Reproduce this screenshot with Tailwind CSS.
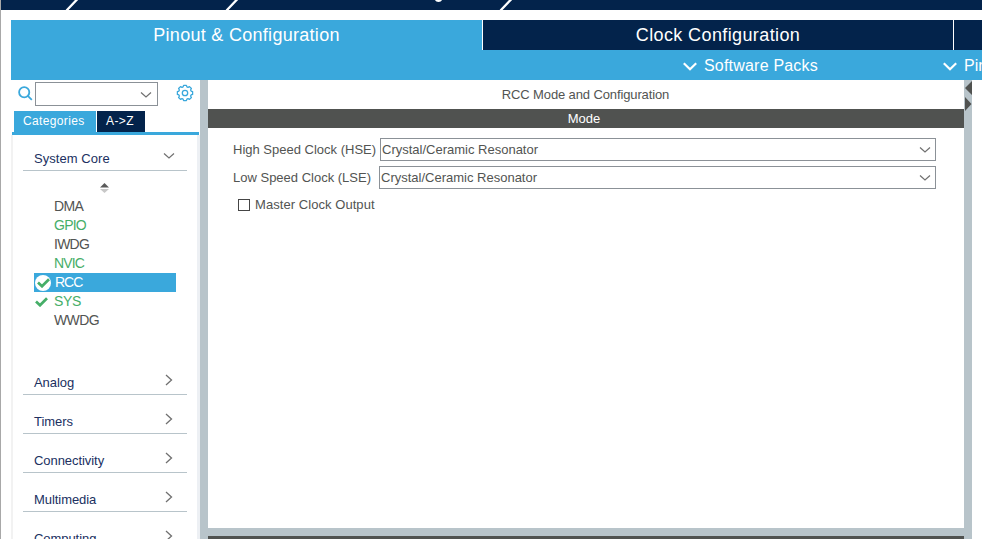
<!DOCTYPE html>
<html lang="en">
<head>
<meta charset="utf-8">
<title>Pinout &amp; Configuration</title>
<script src="https://cdn.jsdelivr.net/npm/@tailwindcss/browser@4"></script>
</head>
<body class="bg-white">
<svg class="hidden">
  <symbol id="down" viewBox="0 0 12 8"><path d="M1 1.500l5 4.500 5-4.500" fill="none" stroke="currentColor" stroke-width="1.2"/></symbol>
  <symbol id="right" viewBox="0 0 8 12"><path d="M1 1l5.500 5-5.500 5" fill="none" stroke="currentColor" stroke-width="1.3"/></symbol>
  <symbol id="bold-down" viewBox="0 0 14 9"><path d="M.8 1.200l6.200 6 6.200-6" fill="none" stroke="currentColor" stroke-width="2.2"/></symbol>
  <symbol id="check" viewBox="0 0 13 10"><path d="M1 4.600l4 3.700L12 1.200" fill="none" stroke="#46ae68" stroke-width="2.7"/></symbol>
</svg>
<div class="flex h-[539px] w-[982px] flex-col overflow-hidden whitespace-nowrap border-l border-[#a8a8a8] bg-white font-['Liberation_Sans',Arial,sans-serif] text-[13px] text-[#525452]">
  <header class="h-[10px] shrink-0 bg-[#03234b]">
    <svg class="block" width="981" height="10" viewBox="1 0 981 10"><path d="M77.500 -1L66.500 10.500M237.500 -1L226.500 10.500M511.500 -1L500.500 10.500" stroke="#fff" stroke-width="2.300"/><path d="M435 0h7c-1 2.600-6 2.600-7 0z" fill="#fff"/></svg>
  </header>
  <nav class="mt-[10px] ml-[10px] flex h-[30px] shrink-0 gap-px text-[18px] leading-[31px] text-white">
    <div class="w-[471px] shrink-0 bg-[#3aa8dc] text-center"><span class="tracking-[0.29px]">Pinout &amp; Configuration</span></div>
    <div class="w-[470px] shrink-0 bg-[#03234b] text-center"><span class="tracking-[0.39px]">Clock Configuration</span></div>
    <div class="grow bg-[#03234b]"></div>
  </nav>
  <div class="ml-[10px] flex h-[30px] shrink-0 items-center overflow-hidden bg-[#3aa8dc] pl-[672px] text-[16px] leading-[30px] text-white">
    <svg class="mt-[2px] h-[9px] w-[14px] shrink-0"><use href="#bold-down"/></svg>
    <span class="mt-[2px] ml-[7px] w-[239px] shrink-0 tracking-[0.2px]">Software Packs</span>
    <svg class="mt-[2px] h-[9px] w-[14px] shrink-0"><use href="#bold-down"/></svg>
    <span class="mt-[2px] ml-[7px]">Pinout</span>
  </div>
  <div class="ml-[10px] flex min-h-0 grow">
    <aside class="flex w-[189px] shrink-0 flex-col">
      <div class="flex h-[31px] shrink-0 items-start pt-[2px] pl-[7px]">
        <svg class="mt-[4px] h-[15px] w-[15px]" viewBox="0 0 15 15" fill="none" stroke="#3aa8dc" stroke-width="1.800"><circle cx="6.200" cy="6.200" r="5.100"/><path d="M9.800 9.800l4 4"/></svg>
        <div class="ml-[2px] flex h-[24px] w-[123px] items-center justify-end border border-[#8b9197] pr-[5px] text-[#707070]"><svg class="mt-px h-[8px] w-[12px]"><use href="#down"/></svg></div>
        <svg class="ml-[18px] mt-[2px] h-[18px] w-[18px]" viewBox="-9 -9 18 18" fill="none" stroke="#3aa8dc" stroke-width="1.300"><circle r="2.700"/><path stroke-linejoin="round" d="M-1.400-7.600h2.800l.5 1.500 1.100.5 1.500-.8 1.900 1.900-.8 1.500.5 1.100 1.500.5v2.800l-1.500.5-.5 1.100.8 1.500-1.900 1.900-1.500-.8-1.100.5-.5 1.500h-2.800l-.5-1.500-1.100-.5-1.500.8-1.900-1.900.8-1.500-.5-1.100-1.500-.5v-2.800l1.500-.5.5-1.100-.8-1.500 1.900-1.900 1.500.8 1.100-.5z"/></svg>
      </div>
      <div class="ml-[3px] flex h-[21px] shrink-0 gap-px text-[12px] leading-[21px] text-white">
        <div class="w-[82px] bg-[#3aa8dc] pl-[9px] tracking-[0.35px]">Categories</div>
        <div class="w-[48px] bg-[#03234b] pl-[9px] tracking-[0.4px]">A-&gt;Z</div>
      </div>
      <div class="ml-px h-[3px] w-[187px] shrink-0 bg-[#3aa8dc]"></div>
      <div class="min-h-0 grow overflow-hidden border-r-[3px] border-l-2 border-r-[#edf0f4] border-l-[#f2f2f2] pr-[10px] pl-[10px] tracking-[-0.06px] text-[#20305f]">
        <div class="flex h-[36px] items-end justify-between border-b border-[#b8c4ca] pr-[12px] pl-[11px]"><span class="mb-[4px] leading-[15px] tracking-[0.05px]">System Core</span><svg class="mb-[10px] h-[8px] w-[12px] text-[#707070]"><use href="#down"/></svg></div>
        <svg class="mt-[12px] ml-[77px] block h-[10px] w-[9px]" viewBox="0 0 9 10"><path d="M4.500 0L9 4.500H0z" fill="#5a5a5a"/><path d="M0 6h9L4.500 10z" fill="#c8c8c8"/></svg>
        <ul class="mt-[4px] ml-[11px] w-[142px] text-[14px] leading-[19px] tracking-[-0.6px] text-[#525452]">
          <li class="h-[19px] pl-[20px]">DMA</li>
          <li class="h-[19px] pl-[20px] tracking-[-0.75px] text-[#46ae68]">GPIO</li>
          <li class="h-[19px] pl-[20px] tracking-[-0.75px]">IWDG</li>
          <li class="h-[19px] pl-[20px] tracking-[-0.9px] text-[#46ae68]">NVIC</li>
          <li class="flex h-[19px] items-center bg-[#3aa8dc] pl-px tracking-[-1px] text-white"><span class="mr-[4px] flex h-[16px] w-[16px] items-center justify-center rounded-full bg-white"><svg class="h-[10px] w-[13px]"><use href="#check"/></svg></span>RCC</li>
          <li class="flex h-[19px] items-center pl-px tracking-[-0.35px] text-[#46ae68]"><svg class="mr-[6px] h-[10px] w-[13px]"><use href="#check"/></svg>SYS</li>
          <li class="h-[19px] pl-[20px]">WWDG</li>
        </ul>
        <div class="pt-[26px]">
          <div class="flex h-[39px] items-end justify-between border-b border-[#b8c4ca] pr-[14px] pl-[11px]"><span class="mb-[4px] leading-[15px]">Analog</span><svg class="mb-[8px] h-[12px] w-[8px] text-[#707070]"><use href="#right"/></svg></div>
          <div class="flex h-[39px] items-end justify-between border-b border-[#b8c4ca] pr-[14px] pl-[11px]"><span class="mb-[4px] leading-[15px]">Timers</span><svg class="mb-[8px] h-[12px] w-[8px] text-[#707070]"><use href="#right"/></svg></div>
          <div class="flex h-[39px] items-end justify-between border-b border-[#b8c4ca] pr-[14px] pl-[11px]"><span class="mb-[4px] leading-[15px]">Connectivity</span><svg class="mb-[8px] h-[12px] w-[8px] text-[#707070]"><use href="#right"/></svg></div>
          <div class="flex h-[39px] items-end justify-between border-b border-[#b8c4ca] pr-[14px] pl-[11px]"><span class="mb-[4px] leading-[15px]">Multimedia</span><svg class="mb-[8px] h-[12px] w-[8px] text-[#707070]"><use href="#right"/></svg></div>
          <div class="flex h-[39px] items-end justify-between border-b border-[#b8c4ca] pr-[14px] pl-[11px]"><span class="mb-[4px] leading-[15px]">Computing</span><svg class="mb-[8px] h-[12px] w-[8px] text-[#707070]"><use href="#right"/></svg></div>
        </div>
      </div>
    </aside>
    <div class="w-[8px] shrink-0 bg-[#b8c4ca]"></div>
    <main class="flex w-[756px] shrink-0 flex-col">
      <h1 class="h-[29px] shrink-0 pr-px text-center leading-[29px] tracking-[-0.12px]">RCC Mode and Configuration</h1>
      <h2 class="h-[19px] shrink-0 bg-[#505250] pr-1 text-center leading-[19px] text-white">Mode</h2>
      <div class="h-[400px] shrink-0 pt-[10px] pr-[28px] pl-[25px]">
        <div class="flex h-[23px] items-center"><span class="w-[147px] shrink-0">High Speed Clock (HSE)</span><div class="flex h-[23px] grow items-center justify-between border border-[#8b9197] pr-[4px] pl-px"><span>Crystal/Ceramic Resonator</span><svg class="h-[8px] w-[12px] text-[#707070]"><use href="#down"/></svg></div></div>
        <div class="mt-[5px] flex h-[23px] items-center"><span class="w-[146px] shrink-0">Low Speed Clock (LSE)</span><div class="flex h-[23px] grow items-center justify-between border border-[#8b9197] pr-[4px] pl-px"><span>Crystal/Ceramic Resonator</span><svg class="h-[8px] w-[12px] text-[#707070]"><use href="#down"/></svg></div></div>
        <div class="mt-[6px] flex h-[20px] items-center pl-[5px]"><span class="mr-[5px] h-[12px] w-[12px] border border-[#454545]"></span><span class="tracking-[0.06px]">Master Clock Output</span></div>
      </div>
      <div class="h-[8px] shrink-0 bg-[#b8c4ca]"></div>
      <div class="grow bg-[#505250]"></div>
    </main>
    <div class="w-[8px] shrink-0 bg-[#b8c4ca]"><svg class="block h-[31px] w-[8px]" viewBox="0 0 8 31"><path d="M8 1v14L1 8zM1 17l6.500 7L1 31z" fill="#505250"/></svg></div>
  </div>
</div>
</body>
</html>
